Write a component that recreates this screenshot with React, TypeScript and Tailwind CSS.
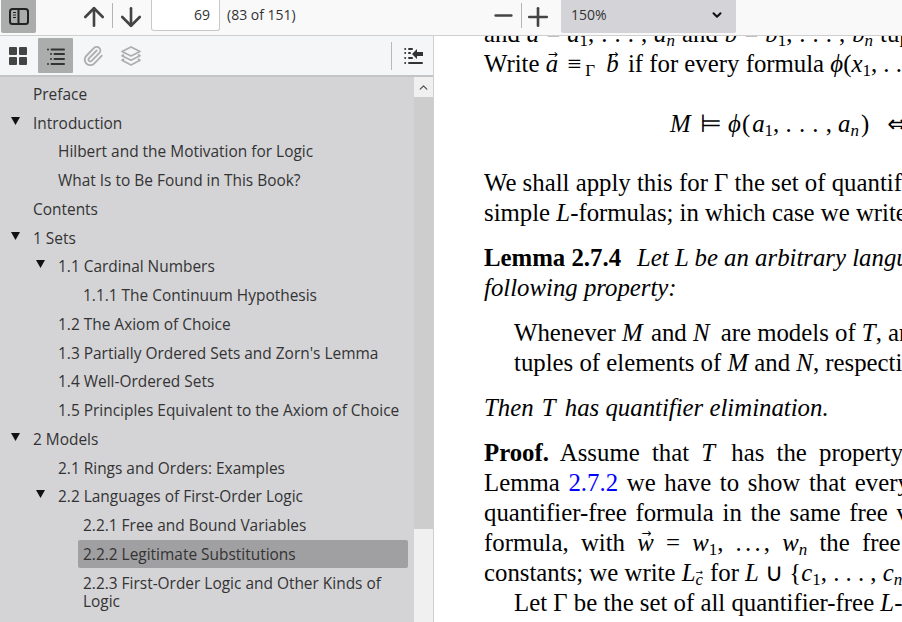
import type { ReactNode } from 'react';
import { ArrowUp, ArrowDown, Minus, Plus, ChevronDown, ChevronUp, Paperclip } from 'lucide-react';

type OutlineItem = { label: string; level: number; open?: boolean; selected?: boolean };

const outline: OutlineItem[] = [
    { label: 'Preface', level: 0 },
    { label: 'Introduction', level: 0, open: true },
    { label: 'Hilbert and the Motivation for Logic', level: 1 },
    { label: 'What Is to Be Found in This Book?', level: 1 },
    { label: 'Contents', level: 0 },
    { label: '1 Sets', level: 0, open: true },
    { label: '1.1 Cardinal Numbers', level: 1, open: true },
    { label: '1.1.1 The Continuum Hypothesis', level: 2 },
    { label: '1.2 The Axiom of Choice', level: 1 },
    { label: "1.3 Partially Ordered Sets and Zorn's Lemma", level: 1 },
    { label: '1.4 Well-Ordered Sets', level: 1 },
    { label: '1.5 Principles Equivalent to the Axiom of Choice', level: 1 },
    { label: '2 Models', level: 0, open: true },
    { label: '2.1 Rings and Orders: Examples', level: 1 },
    { label: '2.2 Languages of First-Order Logic', level: 1, open: true },
    { label: '2.2.1 Free and Bound Variables', level: 2 },
    { label: '2.2.2 Legitimate Substitutions', level: 2, selected: true },
    { label: '2.2.3 First-Order Logic and Other Kinds of Logic', level: 2 },
];

function OutlineRow({ item }: { item: OutlineItem }) {
    const indent = item.level === 0 ? 'ml-0' : item.level === 1 ? 'ml-[25px]' : 'ml-[50px]';
    return (
        <div className={`relative mb-[0.75px] ${indent} pl-[33px]`}>
            {item.open && (
                <svg className="absolute left-[11px] top-[8px]" width="9" height="8" viewBox="0 0 9 8">
                    <path d="M0 0h9L4.5 8z" fill="#111" />
                </svg>
            )}
            <div
                className={`-ml-[5px] pl-[5px] pr-[5px] py-[5px] rounded-[2px] text-[15.45px] leading-[18px] text-[#333] ${
                    item.selected ? 'bg-[#a0a0a2]' : ''
                }`}
            >
                {item.label}
            </div>
        </div>
    );
}

function Vec({ children, wide, small }: { children: ReactNode; wide?: boolean; small?: boolean }) {
    const place = small ? 'text-[9px] left-[0px] top-[-3px]' : wide ? 'text-[12px] left-[4px] top-[-1px]' : 'text-[12px] left-[2px] top-[-1px]';
    return (
        <span className="relative inline-block italic">
            {children}
            <span className={`absolute not-italic font-['DejaVu_Sans',sans-serif] leading-none ${place}`}>→</span>
        </span>
    );
}

function Sub({ children }: { children: ReactNode }) {
    return <span className="not-italic text-[17px] align-[-4px] leading-none">{children}</span>;
}

function SubI({ children }: { children: ReactNode }) {
    return <span className="italic text-[17px] align-[-4px] leading-none">{children}</span>;
}

function PageLine({ children, className = '' }: { children: ReactNode; className?: string }) {
    return <div className={`h-[30px] leading-[30px] whitespace-nowrap ${className}`}>{children}</div>;
}

export default function App() {
    return (
        <div className="w-[902px] h-[622px] overflow-hidden flex flex-col bg-white font-['Open_Sans','Noto_Sans',sans-serif]">
            {/* top toolbar */}
            <div className="h-[36px] shrink-0 flex bg-[#f9f9fa] border-b border-[#cfcfcf] text-[#333]">
                <button className="ml-[1px] w-[35px] h-[33px] rounded-b-[2px] bg-[#aaadab] flex items-center justify-center">
                    <svg width="20" height="17" viewBox="0 0 20 17" fill="none">
                        <rect x="1" y="1" width="18" height="15" rx="2.5" stroke="#222" strokeWidth="2" />
                        <path d="M9.5 1v15" stroke="#222" strokeWidth="2" />
                        <path d="M4 4.5h3M4 7h3M4 9.5h3" stroke="#222" strokeWidth="1.2" />
                    </svg>
                </button>
                <div className="ml-[47px] w-[22px] h-[33px] flex items-center justify-center">
                    <ArrowUp size={30} strokeWidth={2.1} color="#444" className="shrink-0" />
                </div>
                <div className="ml-[7px] mt-[3px] w-px h-[25px] bg-[#b4b4b4]" />
                <div className="ml-[7px] w-[22px] h-[33px] flex items-center justify-center">
                    <ArrowDown size={30} strokeWidth={2.1} color="#444" className="shrink-0" />
                </div>
                <div className="ml-[9px] w-[69px] h-[31px] bg-white border border-[#c8c8c8] border-t-0 rounded-b-[3px] pr-[9px] text-right text-[14px] leading-[30px]">
                    69
                </div>
                <div className="ml-[7px] w-[70px] h-[31px] text-[14px] leading-[30px] whitespace-nowrap">(83 of 151)</div>
                <div className="ml-[196px] w-[20px] h-[31px] flex items-center justify-center">
                    <Minus size={27} strokeWidth={2.2} color="#444" className="shrink-0" />
                </div>
                <div className="ml-[8px] mt-[3px] w-px h-[25px] bg-[#b4b4b4]" />
                <div className="ml-[5px] w-[22px] h-[33px] flex items-center justify-center">
                    <Plus size={30} strokeWidth={2.1} color="#444" className="shrink-0" />
                </div>
                <div className="ml-[12px] w-[175px] h-[33px] rounded-b-[2px] bg-[#d4d4d8] flex items-center justify-between pl-[10px] pr-[12px] text-[14px]">
                    <span className="-mt-[5px]">150%</span>
                    <ChevronDown size={14} strokeWidth={3.5} color="#111" className="-mt-[3px]" />
                </div>
            </div>

            <div className="flex-1 flex min-h-0">
                {/* sidebar */}
                <div className="w-[434px] shrink-0 flex flex-col border-r border-[#cfcfcf]">
                    <div className="h-[41px] shrink-0 flex items-center bg-[#f5f6f7] border-b-2 border-[#c4c4c4]">
                        <div className="ml-[9px] w-[18px] h-[18px] grid grid-cols-2 gap-[2px]">
                            <span className="bg-[#444] rounded-[1px]" />
                            <span className="bg-[#444] rounded-[1px]" />
                            <span className="bg-[#444] rounded-[1px]" />
                            <span className="bg-[#444] rounded-[1px]" />
                        </div>
                        <div className="ml-[11px] w-[35px] h-[35px] rounded-[1px] bg-[#aaadab] flex items-center justify-center">
                            <svg width="18" height="18" viewBox="0 0 18 18" fill="#333">
                                <circle cx="1" cy="2.5" r="1" />
                                <rect x="3.5" y="1.5" width="14.5" height="2" rx="1" />
                                <circle cx="4" cy="7" r="1" />
                                <rect x="6.5" y="6" width="11.5" height="2" rx="1" />
                                <circle cx="4" cy="12" r="1" />
                                <rect x="6.5" y="11" width="11.5" height="2" rx="1" />
                                <circle cx="1" cy="17" r="1" />
                                <rect x="3.5" y="16" width="14.5" height="2" rx="1" />
                            </svg>
                        </div>
                        <Paperclip size={22} strokeWidth={2} color="#aeaeae" className="ml-[9px]" />
                        <svg className="ml-[16px]" width="22" height="22" viewBox="0 0 22 22" fill="none" stroke="#aeaeae" strokeWidth="1.7" strokeLinejoin="round">
                            <path d="M11 2l9 4.5-9 4.5-9-4.5z" />
                            <path d="M4 9.5l-2 1.2 9 4.5 9-4.5-2-1.2" />
                            <path d="M4 14l-2 1.2 9 4.8 9-4.8-2-1.2" />
                        </svg>
                        <div className="ml-[249px] w-px h-[28px] bg-[#b8b8b8]" />
                        <svg className="ml-[12px]" width="19" height="18" viewBox="0 0 19 18" fill="#333">
                            <circle cx="1.2" cy="2" r="1" />
                            <circle cx="1.2" cy="6" r="1" />
                            <circle cx="1.2" cy="11" r="1" />
                            <circle cx="1.2" cy="16" r="1" />
                            <rect x="4" y="1" width="5" height="2" rx="1" />
                            <rect x="4" y="5" width="3" height="2" rx="1" />
                            <path d="M8 7l5-5v3h6v4h-6v3z" />
                            <rect x="4" y="10" width="5" height="2" rx="1" />
                            <rect x="4" y="15" width="15" height="2" rx="1" />
                        </svg>
                    </div>
                    <div className="flex-1 flex min-h-0 bg-[#d4d4d7]">
                        <div className="flex-1 overflow-hidden pt-[2.75px] pr-[6px]">
                            {outline.map((item) => (
                                <OutlineRow key={item.label} item={item} />
                            ))}
                        </div>
                        <div className="w-[19px] shrink-0 flex flex-col bg-[#f0f0f0]">
                            <div className="h-[20px] flex items-center justify-center">
                                <ChevronUp size={13} strokeWidth={2.5} color="#555" />
                            </div>
                            <div className="h-[432px] bg-[#cdcdcd]" />
                        </div>
                    </div>
                </div>

                {/* pdf page */}
                <div className="flex-1 overflow-hidden pl-[50px] text-[24.8px] text-black font-['Liberation_Serif',serif]">
                    <div className="-mt-[17px]">
                        <PageLine className="[word-spacing:0.8px]">
                            and <i>a</i> = <i>a</i><Sub>1</Sub>, . . . , <i>a</i><SubI>n</SubI> and <i>b</i> = <i>b</i><Sub>1</Sub>, . . . , <i>b</i><SubI>n</SubI> tuples
                        </PageLine>
                        <PageLine>
                            Write <Vec>a</Vec> <span className="ml-[3px]">≡</span><span className="ml-[4px]"><Sub>Γ</Sub></span> <span className="ml-[5px] mr-[3px]"><Vec>b</Vec></span> if for every formula <i>ϕ</i>(<i>x</i><Sub>1</Sub>, . . .
                        </PageLine>
                        <PageLine className="mt-[30px] pl-[186px]">
                            <i>M</i> <span className="ml-[3px]">⊨</span> <i>ϕ</i>
                            <span className="ml-[1px]">(</span><i className="ml-[2px]">a</i><Sub>1</Sub>, <span className="[word-spacing:1px]">. . . ,</span> <i>a</i><SubI>n</SubI>
                            <span className="ml-[2px]">)</span>
                            <span className="ml-[18px] font-['DejaVu_Sans',sans-serif] text-[24px]">⇔</span>
                        </PageLine>
                        <PageLine className="mt-[29px]">We shall apply this for Γ the set of quantifier-free</PageLine>
                        <PageLine>simple <i>L</i>-formulas; in which case we write</PageLine>
                        <PageLine className="mt-[15px]">
                            <b>Lemma 2.7.4</b><i className="ml-[16px]">Let L be an arbitrary language</i>
                        </PageLine>
                        <PageLine className="italic">following property:</PageLine>
                        <PageLine className="mt-[15px] pl-[30px]">
                            Whenever <i className="mr-[2px]">M</i> and <i className="mr-[5px]">N</i> are models of <i>T</i>, and
                        </PageLine>
                        <PageLine className="pl-[30px]">
                            tuples of elements of <i>M</i> and <i>N</i>, respectively
                        </PageLine>
                        <PageLine className="mt-[15px] italic">
                            Then <span className="ml-[2px] mr-[3px]">T</span> has quantifier elimination.
                        </PageLine>
                        <PageLine className="mt-[15px] [word-spacing:6px]">
                            <b>Proof.</b> Assume that <i className="mr-[4px]">T</i> has the property
                        </PageLine>
                        <PageLine className="[word-spacing:2.5px]">
                            Lemma <span className="text-[#0000ff]">2.7.2</span> we have to show that every
                        </PageLine>
                        <PageLine className="[word-spacing:2.5px]">quantifier-free formula in the same free variables</PageLine>
                        <PageLine className="[word-spacing:6px]">
                            formula, with <Vec wide>w</Vec> = <i>w</i><Sub>1</Sub>, <span className="[word-spacing:-3px]">. . . ,</span> <i>w</i><SubI>n</SubI> the free
                        </PageLine>
                        <PageLine>
                            constants; we write <i>L</i>
                            <span className="text-[17px] align-[-4px] leading-none"><Vec small>c</Vec></span>
                            <span className="ml-[7px]">for</span> <i>L</i> ∪ {'{'}<i>c</i><Sub>1</Sub>, . . . , <i>c</i><SubI>n</SubI>
                        </PageLine>
                        <PageLine className="pl-[30px]">
                            Let Γ be the set of all quantifier-free <i>L</i>-formulas
                        </PageLine>
                    </div>
                </div>
            </div>
        </div>
    );
}
